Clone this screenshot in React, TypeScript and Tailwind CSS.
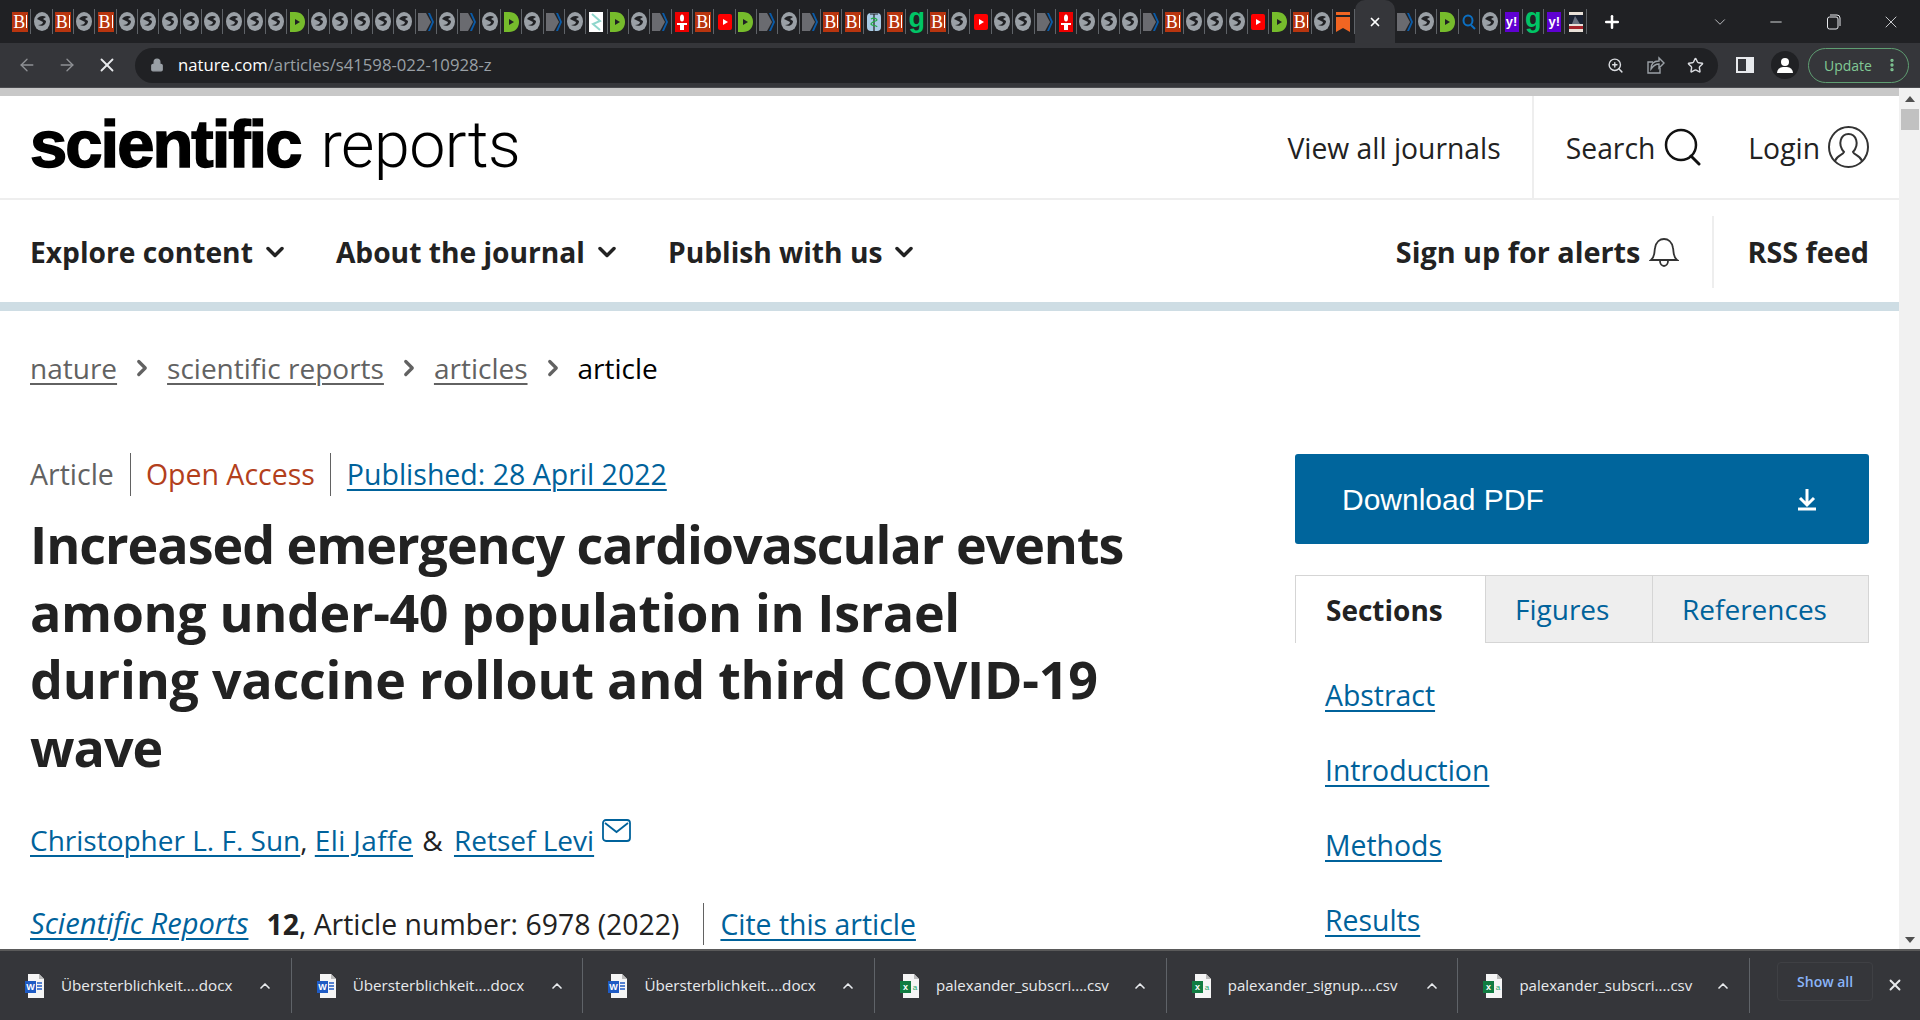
import React from "react"
import {
  ArrowLeft,
  ArrowRight,
  X,
  Lock,
  ZoomIn,
  Star,
  ChevronDown,
  ChevronUp,
  ChevronRight,
  Minus,
  Plus,
  EllipsisVertical,
} from "lucide-react"

const Globe = () => (
  <svg width="16" height="19" viewBox="0 0 16 19">
    <ellipse cx="8" cy="9.5" rx="8" ry="9.5" fill="#9aa0a6" />
    <path d="M3 7c2-3 6-4 9-2l-3 2 3 2c0 4-4 6-8 4 3 0 5-1 5-3L5 8z" fill="#202124" />
  </svg>
)

const BIcon = () => (
  <div className="w-4 h-[20px] bg-[#b8350f] flex items-center justify-between pl-[1px] pr-[1px]">
    <span className="text-white font-['Liberation_Serif'] text-[18px] leading-none">B</span>
    <div className="w-[1px] h-[13px] bg-white" />
  </div>
)

const DIcon = () => (
  <svg width="15" height="20" viewBox="0 0 15 20">
    <path d="M0 0h5c6 0 10 4 10 10s-4 10-10 10H0z" fill="#76bc2c" />
    <path d="M5 7l5 3-5 3z" fill="#202124" />
  </svg>
)

const ArrowIcon = () => (
  <svg width="16" height="20" viewBox="0 0 16 20">
    <path d="M0 1h8l5 9-5 9H0z" fill="#6a6b70" />
    <path d="M10 1h2l4 9-4 9h-2l4-9z" fill="#0a5ba8" />
  </svg>
)

const TorchIcon = () => (
  <svg width="14" height="20" viewBox="0 0 14 20">
    <rect width="14" height="20" fill="#ee0000" />
    <ellipse cx="7" cy="6" rx="2" ry="3.5" fill="#fff" />
    <path d="M2 11h10v2H9v5H5v-5H2z" fill="#fff" />
  </svg>
)

const YouTubeIcon = () => (
  <svg width="14" height="16" viewBox="0 0 14 16">
    <rect width="14" height="16" rx="2" fill="#f00" />
    <path d="M5 5l5 3-5 3z" fill="#fff" />
  </svg>
)

const GIcon = () => (
  <span className="w-4 text-center text-[#00c566] font-['Liberation_Sans'] font-bold text-[27px] leading-[18px] pb-[7px]">g</span>
)

const YahooIcon = () => (
  <div className="w-[14px] h-5 bg-[#5f01d1] flex items-center justify-center">
    <span className="text-white font-['Liberation_Sans'] font-bold text-[13px] leading-none">y!</span>
  </div>
)

const CaduceusIcon = () => (
  <svg width="14" height="20" viewBox="0 0 14 20">
    <rect y="1" width="14" height="18" rx="4" fill="#a9cbe6" />
    <path d="M3 2h8M7 2v17" stroke="#222" strokeWidth="1.2" />
    <path d="M4 7c3-2 6 0 6 1s-6 2-6 4 6 1 6 3" stroke="#22aa44" strokeWidth="1.2" fill="none" />
  </svg>
)

const LeafIcon = () => (
  <svg width="14" height="20" viewBox="0 0 14 20">
    <rect width="14" height="20" fill="#fff" />
    <path d="M3 2l8 7-7 3 7 6" stroke="#8fd6cc" strokeWidth="2" fill="none" />
  </svg>
)

const BookmarkIcon = () => (
  <svg width="14" height="20" viewBox="0 0 14 20">
    <rect width="14" height="3" fill="#f26522" />
    <path d="M0 5h14v15l-7-4-7 4z" fill="#f26522" />
  </svg>
)

const SearchFav = () => (
  <svg width="14" height="16" viewBox="0 0 14 16" fill="none">
    <ellipse cx="6" cy="6.5" rx="4.5" ry="5" stroke="#0b6fc2" strokeWidth="2" />
    <path d="M9 11l4 4" stroke="#0b6fc2" strokeWidth="2" />
  </svg>
)

const PosterIcon = () => (
  <svg width="14" height="20" viewBox="0 0 14 20">
    <rect width="14" height="20" fill="#e8e0d8" />
    <rect y="3" width="14" height="9" fill="#1b2233" />
    <rect y="14" width="14" height="3" fill="#a3222a" />
    <path d="M3 12l3-8 5 8z" fill="#6a7180" />
  </svg>
)

const icons: Record<string, React.ReactNode> = {
  B: <BIcon />,
  o: <Globe />,
  D: <DIcon />,
  A: <ArrowIcon />,
  T: <TorchIcon />,
  Y: <YouTubeIcon />,
  G: <GIcon />,
  y: <YahooIcon />,
  C: <CaduceusIcon />,
  L: <LeafIcon />,
  M: <BookmarkIcon />,
  Q: <SearchFav />,
  P: <PosterIcon />,
}

const tabsBefore = "BoBoBooooooooDoooooAoAoDoAoLDoATBYDAoABBCBGBoYooATooo".split("").concat("ABoooYDBoM".split(""))
const tabsAfter = "AoDQoyGyP".split("")

const Tab = ({ kind }: { kind: string }) => (
  <div className="w-[21.35px] h-[25px] flex items-center justify-center border-r border-[#5f6368] shrink-0">
    {icons[kind]}
  </div>
)

const WordIcon = () => (
  <svg width="19" height="24" viewBox="0 0 19 24">
    <path d="M3 0h11l5 5v19H3z" fill="#f5f5f5" />
    <path d="M14 0v5h5z" fill="#bbb" />
    <rect x="0" y="7" width="11" height="12" fill="#1f5bc4" />
    <text x="5.5" y="16" fontSize="9" fill="#fff" fontFamily="Liberation Sans" fontWeight="bold" textAnchor="middle">W</text>
    <path d="M12 9h5M12 12h5M12 15h5" stroke="#1f5bc4" strokeWidth="1.3" />
  </svg>
)

const ExcelIcon = () => (
  <svg width="19" height="24" viewBox="0 0 19 24">
    <path d="M3 0h11l5 5v19H3z" fill="#f5f5f5" />
    <path d="M14 0v5h5z" fill="#bbb" />
    <rect x="0" y="7" width="11" height="12" fill="#107c41" />
    <text x="5.5" y="16" fontSize="9" fill="#fff" fontFamily="Liberation Sans" fontWeight="bold" textAnchor="middle">x</text>
    <text x="15" y="16" fontSize="8" fill="#21a366" fontFamily="Liberation Sans" textAnchor="middle">a</text>
  </svg>
)

const downloads = [
  { name: "Übersterblichkeit....docx", word: true },
  { name: "Übersterblichkeit....docx", word: true },
  { name: "Übersterblichkeit....docx", word: true },
  { name: "palexander_subscri....csv", word: false },
  { name: "palexander_signup....csv", word: false },
  { name: "palexander_subscri....csv", word: false },
]

const DownloadItem = ({ name, word }: { name: string; word: boolean }) => (
  <div className="w-[291.7px] h-[55px] flex items-center pl-[25px] border-r border-[#5f6368] shrink-0">
    {word ? <WordIcon /> : <ExcelIcon />}
    <span
      className={
        "ml-[17px] w-[196px] text-[#e8eaed] font-['Open_Sans',sans-serif] whitespace-nowrap " +
        (word ? "text-[15.200px]" : "text-[15px]")
      }
    >
      {name}
    </span>
    <ChevronUp size={16} strokeWidth={2.5} className="text-[#e8eaed]" />
  </div>
)

const Sep = ({ name, className }: { name: string; className?: string }) => (
  <a className={"underline underline-offset-[4px] decoration-2 " + (className || "")}>{name}</a>
)

export default function App() {
  return (
    <div className="w-full h-screen flex flex-col overflow-hidden bg-white font-['Open_Sans',sans-serif] text-[#222]">
      {/* tab strip */}
      <div className="h-[43px] bg-[#202124] flex items-center pl-[10px] shrink-0">
        {tabsBefore.map((k, i) => (
          <Tab key={i} kind={k} />
        ))}
        <div className="w-[40px] h-[43px] mt-0 bg-[#35363a] rounded-t-[10px] flex items-center justify-center shrink-0">
          <X size={14} strokeWidth={3} className="text-white" />
        </div>
        {tabsAfter.map((k, i) => (
          <Tab key={i} kind={k} />
        ))}
        <Plus size={20} strokeWidth={3} className="text-white ml-[15px]" />
        <div className="flex-1" />
        <ChevronDown size={18} strokeWidth={1} className="text-[#e8eaed]" />
        <Minus size={18} strokeWidth={1.2} className="text-[#e8eaed] ml-[38px]" />
        <svg width="14" height="16" viewBox="0 0 14 16" fill="none" stroke="#e8eaed" className="ml-[42px]">
          <rect x="0.5" y="3" width="10.5" height="12" rx="2" />
          <path d="M3 1h7a3 3 0 0 1 3 3v8" />
        </svg>
        <X size={20} strokeWidth={1} className="text-[#e8eaed] ml-[40px] mr-[19px]" />
      </div>
      {/* toolbar */}
      <div className="h-[45px] bg-[#35363a] flex items-center shrink-0 border-b border-[#4a4b4f]">
        <ArrowLeft size={20} strokeWidth={1.6} className="text-[#8f9195] ml-[17px]" />
        <ArrowRight size={20} strokeWidth={1.6} className="text-[#8f9195] ml-[20px]" />
        <X size={22} strokeWidth={2} className="text-[#e8eaed] ml-[19px]" />
        <div className="h-[35px] w-[1583px] ml-[17px] rounded-full bg-[#202124] flex items-center">
          <Lock size={14} fill="#9aa0a6" className="text-[#9aa0a6] ml-[15px]" />
          <span className="ml-[14px] text-[16.700px] text-white">
            nature.com<span className="text-[#9aa0a6]">/articles/s41598-022-10928-z</span>
          </span>
          <div className="flex-1" />
          <ZoomIn size={17} className="text-[#dadce0]" />
          <svg width="19" height="19" viewBox="0 0 19 19" fill="none" stroke="#9aa0a6" strokeWidth="1.4" className="ml-[22px]">
            <path d="M14 12v5H2V6h5" />
            <path d="M5 13c0-5 3-8 8-8V2l5 5-5 5V8c-4 0-6 2-8 5z" />
          </svg>
          <Star size={17} className="text-[#dadce0] ml-[22px] mr-[14px]" />
        </div>
        <svg width="18" height="16" viewBox="0 0 18 16" className="ml-[18px]">
          <rect width="18" height="16" fill="#e8eaed" />
          <rect x="2" y="2" width="8" height="12" fill="#35363a" />
        </svg>
        <div className="w-[28px] h-[28px] rounded-full bg-[#202124] ml-[17px] flex flex-col items-center justify-center">
          <div className="w-2 h-2 rounded-full bg-white" />
          <div className="w-4 h-[6px] rounded-t-full bg-white mt-[1px]" />
        </div>
        <div className="h-[35px] w-[101px] ml-[9px] rounded-full border border-[#5f9e72] flex items-center text-[#81c995] text-[14px] pl-[15px]">
          Update
          <EllipsisVertical size={16} strokeWidth={3} className="ml-[12px]" />
        </div>
      </div>
      <div className="flex-1 min-h-0 flex">
        {/* page */}
        <div className="flex-1 min-w-0 overflow-hidden">
          <div className="h-[8px] bg-[#c8c8c8]" />
          <header className="h-[104px] flex justify-between border-b-2 border-[#eee] pl-[30px] pr-[30px]">
            <div className="flex items-baseline pt-[3px] text-black text-[67px] leading-[90px] font-['Liberation_Sans',sans-serif]">
              <span className="font-bold [-webkit-text-stroke:1.5px_black] tracking-[-2px]">scientific</span>
              <span className="ml-[20px] text-[64.500px] tracking-[-0.5px] font-['Roboto',sans-serif] font-light">reports</span>
            </div>
            <div className="flex items-center text-[28.300px] text-[#222]">
              <span className="pr-[31px] pt-[2px] h-full flex items-center border-r-2 border-[#eee]">View all journals</span>
              <span className="ml-[32px] mt-[2px]">Search</span>
              <svg width="38" height="38" viewBox="0 0 38 38" fill="none" stroke="#111" strokeWidth="2.5" className="ml-[9px]">
                <circle cx="17" cy="17" r="15" />
                <path d="M27 28l8 8" strokeLinecap="round" strokeWidth="3" />
              </svg>
              <span className="ml-[46px] mt-[2px]">Login</span>
              <svg width="41" height="42" viewBox="0 0 41 42" fill="none" stroke="#333" strokeWidth="2" className="ml-[8px]">
                <ellipse cx="20.5" cy="21" rx="19.5" ry="20" />
                <path d="M7 35c2-6 8-6 9-9-7-8-3-18 4.500-18s11.500 10 4.500 18c1 3 7 3 9 9" />
              </svg>
            </div>
          </header>
          <nav className="h-[102px] flex items-center justify-between pl-[30px] pr-[30px] pt-[2px] text-[28.200px] font-bold text-[#222]">
            <div className="flex items-center">
              <span>Explore content</span>
              <ChevronDown size={28} strokeWidth={3} className="ml-[8px]" />
              <span className="ml-[47px]">About the journal</span>
              <ChevronDown size={28} strokeWidth={3} className="ml-[8px]" />
              <span className="ml-[47px]">Publish with us</span>
              <ChevronDown size={28} strokeWidth={3} className="ml-[8px]" />
            </div>
            <div className="flex items-center h-[72px] text-[28.800px]">
              <span>Sign up for alerts</span>
              <svg width="30" height="32" viewBox="0 0 30 32" fill="none" stroke="#333" strokeWidth="1.8" className="ml-[9px]">
                <path d="M2 24c4-3 3-7 4-12 1-6 5-9 9-9s8 3 9 9c1 5 0 9 4 12z" />
                <path d="M11 25a4 5 0 0 0 8 0" />
              </svg>
              <div className="w-[2px] h-full bg-[#eee] ml-[33px] mr-[33px]" />
              <span>RSS feed</span>
            </div>
          </nav>
          <div className="h-[9px] bg-[#cedde4]" />
          <div className="flex items-center text-[28px] pl-[30px] mt-[37px] h-[40px] text-[#626262]">
            <Sep name="nature" />
            <ChevronRight size={26} strokeWidth={3} className="mx-[12px]" />
            <Sep name="scientific reports" />
            <ChevronRight size={26} strokeWidth={3} className="mx-[12px]" />
            <Sep name="articles" />
            <ChevronRight size={26} strokeWidth={3} className="mx-[12px]" />
            <span className="text-black">article</span>
          </div>
          <div className="flex justify-between pl-[30px] pr-[30px] mt-[65px]">
            <div className="w-[1150px]">
              <div className="flex items-center text-[28.500px] h-[37px] mt-[3px]">
                <span className="text-[#626262] pr-[16px] border-r border-[#626262]">Article</span>
                <span className="text-[#b3401c] px-[15px] border-r border-[#626262]">Open Access</span>
                <Sep name="Published: 28 April 2022" className="ml-[16px] text-[#00629b]" />
              </div>
              <h1 className="mt-[17px] text-[52px] leading-[67.500px] font-bold text-[#222] whitespace-nowrap">
                <span className="block tracking-[-1.030px]">Increased emergency cardiovascular events</span>
                <span className="block tracking-[-0.380px]">among under-40 population in Israel</span>
                <span className="block tracking-[-0.230px]">during vaccine rollout and third COVID-19</span>
                <span className="block tracking-[-1px]">wave</span>
              </h1>
              <div className="mt-[39px] flex items-start text-[28px] h-[48px]">
                <Sep name="Christopher L. F. Sun" className="text-[#00629b]" />
                <span>,&nbsp;</span>
                <Sep name="Eli Jaffe" className="text-[#00629b] tracking-[0.4px]" />
                <span className="ml-[2px] mr-[4px]">&nbsp;&amp;&nbsp;</span>
                <Sep name="Retsef Levi" className="text-[#00629b]" />
                <svg width="29" height="23" viewBox="0 0 29 23" fill="none" stroke="#00629b" strokeWidth="1.8" className="ml-[8px]">
                  <rect x="1" y="1" width="27" height="21" rx="3" />
                  <path d="M3 4l11.500 9L26 4" />
                </svg>
              </div>
              <div className="mt-[37px] flex items-center text-[28.400px] h-[40px]">
                <Sep name="Scientific Reports" className="italic text-[#00629b] text-[29.100px]" />
                <span className="font-bold ml-[18px]">12</span>
                <span className="pr-[24px] border-r border-[#626262]">, Article number: 6978 (2022)</span>
                <Sep name="Cite this article" className="ml-[16px] text-[#00629b]" />
              </div>
            </div>
            <aside className="w-[574px] shrink-0 mt-[1px]">
              <div className="h-[90px] bg-[#00659c] rounded-[3px] flex items-center justify-between pl-[47px] pr-[52px] text-white">
                <span className="font-['Liberation_Sans',sans-serif] text-[30px]">Download PDF</span>
                <svg width="20" height="24" viewBox="0 0 20 24" fill="none" stroke="#fff" strokeWidth="3">
                  <path d="M10 2v15M3 11l7 7 7-7M1 22h18" />
                </svg>
              </div>
              <div className="mt-[31px] h-[68px] flex text-[28px] text-[#00629b]">
                <div className="w-[190px] flex items-center pl-[30px] font-bold text-[#222] border-l border-t border-[#d5d5d5]">Sections</div>
                <div className="w-[168px] flex items-center pl-[29px] bg-[#eee] border border-[#d5d5d5]">Figures</div>
                <div className="flex-1 flex items-center pl-[29px] bg-[#eee] border border-l-0 border-[#d5d5d5]">References</div>
              </div>
              <div className="mt-[32px] pl-[30px] flex flex-col gap-[35px] items-start text-[28.400px] leading-[40px] text-[#00629b]">
                <Sep name="Abstract" />
                <Sep name="Introduction" />
                <Sep name="Methods" />
                <Sep name="Results" />
              </div>
            </aside>
          </div>
        </div>
        {/* scrollbar */}
        <div className="w-[21px] shrink-0 bg-[#f1f1f1] flex flex-col items-center justify-between pt-[8px] pb-[6px]">
          <div className="flex flex-col items-center w-full">
            <div className="w-0 h-0 border-x-[5px] border-x-transparent border-b-[6px] border-b-[#505050]" />
            <div className="w-[18px] h-[21px] bg-[#c1c1c1] mt-[7px]" />
          </div>
          <div className="w-0 h-0 border-x-[5px] border-x-transparent border-t-[6px] border-t-[#505050]" />
        </div>
      </div>
      {/* downloads bar */}
      <div className="h-[71px] bg-[#35363a] border-t-2 border-[#5a5a5a] flex items-center shrink-0">
        {downloads.map((d, i) => (
          <DownloadItem key={i} {...d} />
        ))}
        <div className="ml-[27px] w-[96px] h-[39px] -mt-[8px] rounded-[4px] border border-[#3f4044] flex items-center justify-center text-[14px] text-[#8ab4f8] font-semibold">
          Show all
        </div>
        <X size={18} strokeWidth={2.5} className="text-[#e8eaed] ml-[13px] -mt-[2px]" />
      </div>
    </div>
  )
}
